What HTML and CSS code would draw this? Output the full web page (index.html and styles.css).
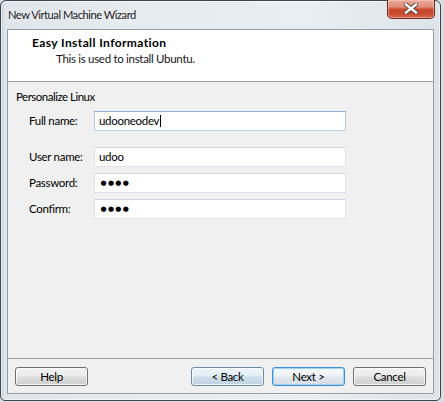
FILE: index.html
```html
<!DOCTYPE html>
<html>
<head>
<meta charset="utf-8">
<link rel="stylesheet" href="styles.css">
</head>
<body>
<div class="window">
  <div class="titlebar">
    <span class="title">New Virtual Machine Wizard</span>
    <div class="close">
      <svg width="14" height="11" viewBox="0 0 14 11">
        <path d="M2 1.5 L12 9.5 M12 1.5 L2 9.5" stroke="#4a3a3a" stroke-width="4.2" stroke-linecap="square" fill="none"/>
        <path d="M2 1.5 L12 9.5 M12 1.5 L2 9.5" stroke="#ffffff" stroke-width="2.4" stroke-linecap="square" fill="none"/>
      </svg>
    </div>
  </div>
  <div class="client">
    <div class="header">
      <div class="h-title">Easy Install Information</div>
      <div class="h-sub">This is used to install Ubuntu.</div>
    </div>
    <div class="content">
      <div class="group-label">Personalize Linux</div>
      <div class="form">
        <label class="lbl">Full name:</label>
        <div class="input focused">udooneodev<span class="caret"></span></div>
        <label class="lbl sep">User name:</label>
        <div class="input sep">udoo</div>
        <label class="lbl">Password:</label>
        <div class="input"><span class="dots">●●●●</span></div>
        <label class="lbl">Confirm:</label>
        <div class="input"><span class="dots">●●●●</span></div>
      </div>
    </div>
    <div class="footer">
      <div class="btn">Help</div>
      <div class="spacer"></div>
      <div class="btn back">&lt; Back</div>
      <div class="btn next">Next &gt;</div>
      <div class="btn">Cancel</div>
    </div>
  </div>
</div>
</body>
</html>
```

FILE: styles.css
```css
html, body {
  margin: 0;
  padding: 0;
}
body {
  width: 444px;
  height: 402px;
  background: #d9dde1;
  font-family: Lato, "Liberation Sans", sans-serif;
  font-size: 11.5px;
  letter-spacing: -0.3px;
  overflow: hidden;
}
.window {
  width: 441px;
  height: 401px;
  box-sizing: border-box;
  border: 1px solid #3d4650;
  border-radius: 6px 6px 5px 5px;
  background:
    linear-gradient(to right, #c8d0d8 0px, #dfe5ea 4px, #e6ebef 30%, #e9eef2 70%, #dde3e9 100%);
  box-shadow: inset 0 0 0 1px rgba(255,255,255,0.55);
  padding: 0 6px 6px 6px;
  display: flex;
  flex-direction: column;
}
.titlebar {
  height: 28px;
  display: flex;
  align-items: flex-start;
  justify-content: space-between;
  flex: none;
}
.title {
  margin-top: 6px;
  padding-left: 1px;
  line-height: 16px;
  font-size: 11.2px;
  letter-spacing: -0.5px;
  color: #1b1b1b;
  text-shadow: 0 0 6px rgba(255,255,255,0.9);
}
.close {
  margin-top: -1px;
  margin-right: -1px;
  width: 48px;
  height: 19px;
  box-sizing: border-box;
  border: 1px solid #6f2a1f;
  border-top: none;
  border-radius: 0 0 5px 5px;
  background: linear-gradient(#eaa999 0%, #df8b76 40%, #c9492f 52%, #c84a2e 75%, #d8684b 100%);
  box-shadow: inset 0 0 0 1px rgba(255,220,210,0.45);
  display: flex;
  align-items: center;
  justify-content: center;
}
.close svg {
  display: block;
  margin-top: -1px;
}
.client {
  height: 365px;
  box-sizing: border-box;
  border: 1px solid #959ea7;
  background: #f0f0f0;
  display: flex;
  flex-direction: column;
  flex: none;
}
.header {
  height: 52px;
  box-sizing: border-box;
  background: #ffffff;
  border-bottom: 1px solid #a0a0a0;
  padding: 5px 0 0 24px;
  flex: none;
}
.h-title {
  font-weight: bold;
  font-size: 12px;
  letter-spacing: 0.4px;
  line-height: 16px;
  color: #000;
}
.h-sub {
  line-height: 16px;
  padding-left: 24px;
  color: #151525;
}
.content {
  flex: 1;
  padding: 7px 0 0 8px;
}
.group-label {
  line-height: 16px;
  letter-spacing: -0.5px;
  color: #000;
}
.form {
  margin-top: 6px;
  padding-left: 13px;
  display: grid;
  grid-template-columns: 65px 252px;
  row-gap: 6px;
  align-items: center;
}
.lbl {
  line-height: 16px;
  color: #000;
}
.sep {
  margin-top: 10px;
}
.input {
  height: 20px;
  box-sizing: border-box;
  background: #fff;
  border: 1px solid #dde2e8;
  border-top-color: #d0d5dc;
  padding-left: 4px;
  line-height: 18px;
  color: #000;
  display: flex;
  align-items: center;
}
.input.focused {
  border-color: #8fb2d8 #b3cde6 #b7d3ee #b3cde6;
}
.caret {
  display: inline-block;
  width: 1px;
  height: 12px;
  background: #000;
  margin-left: 1px;
}
.dots {
  font-family: "DejaVu Sans", sans-serif;
  font-size: 7px;
  letter-spacing: 1.3px;
  margin-left: 1.5px;
  color: #000;
}
.footer {
  height: 35px;
  box-sizing: border-box;
  border-top: 1px solid #a0a0a0;
  padding: 8px 7px 0 7px;
  display: flex;
  gap: 8px;
  flex: none;
}
.spacer {
  flex: 1;
}
.btn {
  width: 73px;
  height: 19px;
  box-sizing: border-box;
  border: 1px solid #707070;
  border-radius: 3px;
  background: linear-gradient(#f2f2f2 0%, #ebebeb 48%, #dddddd 52%, #cfcfcf 100%);
  box-shadow: inset 0 0 0 1px rgba(255,255,255,0.75);
  display: flex;
  align-items: center;
  justify-content: center;
  line-height: 16px;
  color: #000;
}
.btn.back {
  border-color: #6e8aa3;
  background: linear-gradient(#eef5fa 0%, #e2edf5 48%, #d0dfea 52%, #bfd2e1 100%);
}
.btn.next {
  border-color: #3c8fd6;
  background: linear-gradient(#f5f9fc 0%, #edf2f6 48%, #e1e8ee 52%, #d6dee6 100%);
  box-shadow: inset 0 0 0 1px #9fd3f5;
}
```
